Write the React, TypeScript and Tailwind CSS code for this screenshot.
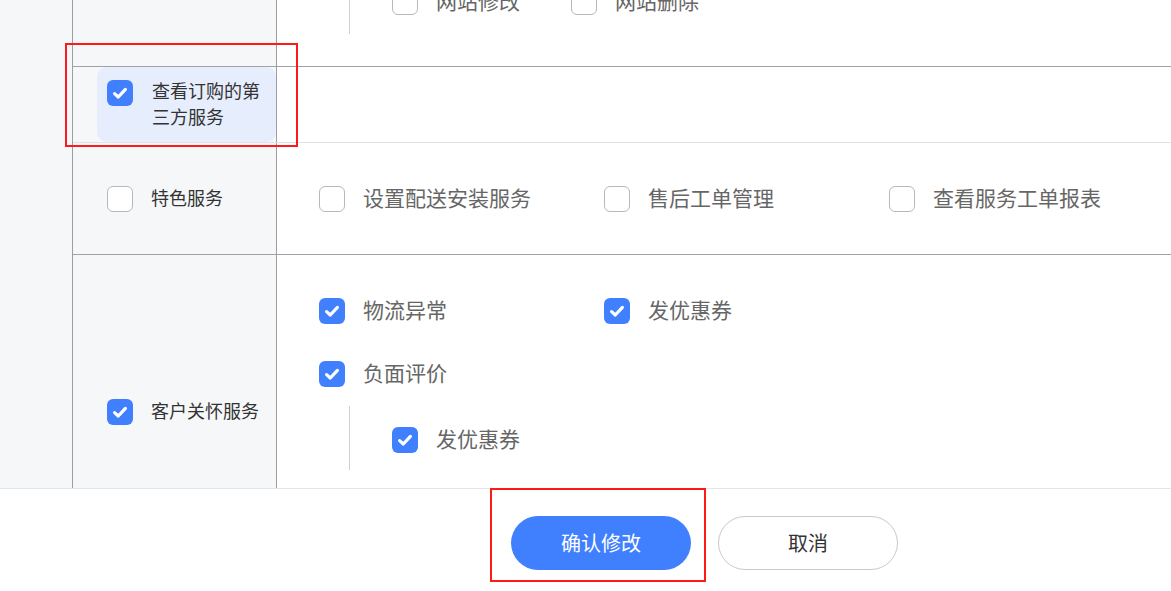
import React from 'react';

const FONT = { fontFamily: '"Noto Sans CJK SC", "Noto Sans", sans-serif' };

const Box: React.FC<{ checked?: boolean }> = ({ checked }) =>
  checked ? (
    <span className="flex h-[26px] w-[26px] shrink-0 items-center justify-center rounded-[6px] bg-[#4080ff]">
      <svg width="26" height="26" viewBox="0 0 26 26" fill="none">
        <path d="M7.6 13.6 L11.3 17 L18.4 9.4" stroke="#fff" strokeWidth="3.2" strokeLinecap="round" strokeLinejoin="round" />
      </svg>
    </span>
  ) : (
    <span className="h-[26px] w-[26px] shrink-0 rounded-[6px] border border-[#b7b7c0] bg-white" />
  );

const Item: React.FC<{ label: string; checked?: boolean; w?: string }> = ({ label, checked, w }) => (
  <div className={`flex h-[27px] items-center gap-[18px] ${w ?? ''}`}>
    <Box checked={checked} />
    <span className="-mt-[2px] text-[21px] leading-none text-[#666]">{label}</span>
  </div>
);

const LeftLabel: React.FC<{ label: string; checked?: boolean }> = ({ label, checked }) => (
  <div className="flex items-center gap-[18px] pl-[34px]">
    <Box checked={checked} />
    <span className="-mt-[2px] text-[18px] text-[#333]">{label}</span>
  </div>
);

export default function App() {
  return (
    <div className="flex h-[591px] w-full flex-col overflow-hidden bg-white" style={FONT}>
      <div className="relative flex h-[488px] overflow-hidden">
        <div className="w-[72px] shrink-0 bg-[#f6f7f9]" />
        <div className="flex flex-1 flex-col border-l border-[#9d9da3]">
          {/* row: 网站管理 (cut off) */}
          <div className="-mt-[34px] flex h-[101px] shrink-0 border-b border-[#a1a1a6]">
            <div className="w-[204px] shrink-0 border-r border-[#9d9da3] bg-[#f6f7f9]" />
            <div className="flex flex-1 flex-col justify-end pb-[32px]">
              <div className="ml-[72px] flex border-l border-[#cfcfd4] pb-[19px] pl-[42px] pt-[20px]">
                <Item label="网站修改" w="w-[179px]" />
                <Item label="网站删除" />
              </div>
            </div>
          </div>

          {/* row: 查看订购的第三方服务 */}
          <div className="flex h-[76px] shrink-0 border-b border-[#e2e2e7]">
            <div className="w-[204px] shrink-0 border-r border-[#9d9da3] bg-[#f6f7f9] pl-[24px]">
              <div className="flex h-full items-center rounded-[10px] bg-[#e6edfd] pl-[10px]">
                <div className="flex items-start gap-[19px]">
                  <div className="-mt-[1px]">
                    <Box checked />
                  </div>
                  <span className="-mt-[4px] w-[120px] text-[18px] leading-[26px] text-[#333]">查看订购的第三方服务</span>
                </div>
              </div>
            </div>
            <div className="flex-1" />
          </div>

          {/* row: 特色服务 */}
          <div className="flex h-[112px] shrink-0 border-b border-[#a1a1a6]">
            <div className="flex w-[204px] shrink-0 items-center border-r border-[#9d9da3] bg-[#f6f7f9]">
              <LeftLabel label="特色服务" />
            </div>
            <div className="flex flex-1 items-center pl-[42px]">
              <Item label="设置配送安装服务" w="w-[285px]" />
              <Item label="售后工单管理" w="w-[285px]" />
              <Item label="查看服务工单报表" />
            </div>
          </div>

          {/* row: 客户关怀服务 */}
          <div className="flex h-[313px] shrink-0">
            <div className="flex w-[204px] shrink-0 items-center border-r border-[#9d9da3] bg-[#f6f7f9]">
              <LeftLabel label="客户关怀服务" checked />
            </div>
            <div className="flex flex-1 flex-col pl-[42px] pt-[42px]">
              <div className="flex">
                <Item label="物流异常" checked w="w-[285px]" />
                <Item label="发优惠券" checked />
              </div>
              <div className="mt-[36px]">
                <Item label="负面评价" checked />
              </div>
              <div className="ml-[30px] mt-[19px] border-l border-[#cfcfd4] pb-[17px] pl-[42px] pt-[20px]">
                <Item label="发优惠券" checked />
              </div>
            </div>
          </div>
        </div>

        <div className="pointer-events-none absolute left-[65px] top-[43px] h-[104px] w-[233px] border-2 border-[#ff1a1a]" />
      </div>

      <div className="flex flex-1 border-t border-[#e4e4e9] pl-[511px] pt-[27px]">
        <div className="relative">
          <button className="h-[54px] w-[180px] rounded-full bg-[#4080ff] text-[20px] text-white">确认修改</button>
          <div className="pointer-events-none absolute -left-[21px] -top-[28px] h-[94px] w-[216px] border-2 border-[#ff1a1a]" />
        </div>
        <button className="ml-[27px] h-[54px] w-[180px] rounded-full border border-[#c9c9cf] bg-white text-[20px] text-[#333]">取消</button>
      </div>
    </div>
  );
}
